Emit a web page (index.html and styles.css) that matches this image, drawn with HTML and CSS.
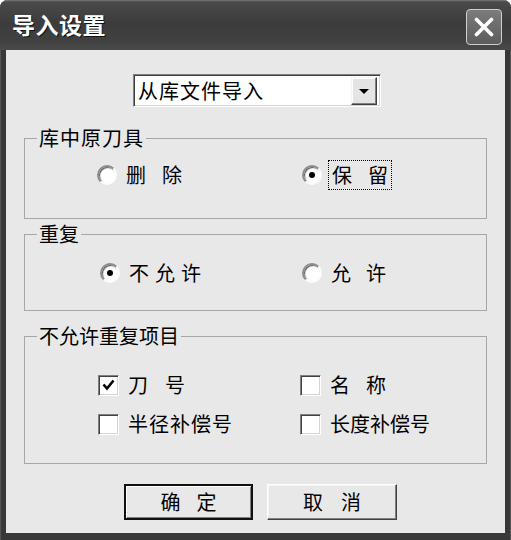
FILE: index.html
```html
<!DOCTYPE html>
<html lang="zh-CN">
<head>
<meta charset="utf-8">
<title>导入设置</title>
<link rel="stylesheet" href="styles.css">
</head>
<body>
<div class="window">
  <div class="titlebar">
    <span class="title">导入设置</span>
    <span class="close">
      <svg width="20" height="20" viewBox="0 0 20 20"><path d="M2.5 2.5 L17.5 17.5 M17.5 2.5 L2.5 17.5" stroke="#fff" stroke-width="3.6" stroke-linecap="round"/></svg>
    </span>
  </div>
  <div class="client">
    <div class="combo">
      <span class="combo-text s1">从库文件导入</span>
      <span class="combo-btn"><span class="tri"></span></span>
    </div>

    <fieldset class="group g1">
      <legend><span class="s1">库中原刀具</span></legend>
      <div class="row r1">
        <label class="opt"><span class="radio"></span><span><span class="s16">删</span>除</span></label>
        <label class="opt"><span class="radio on"></span><span class="focus"><span class="s16">保</span>留</span></label>
      </div>
    </fieldset>

    <fieldset class="group g2">
      <legend>重复</legend>
      <div class="row r2">
        <label class="opt"><span class="radio on"></span><span><span class="s6">不允</span>许</span></label>
        <label class="opt"><span class="radio"></span><span><span class="s15">允</span>许</span></label>
      </div>
    </fieldset>

    <fieldset class="group g3">
      <legend>不允许重复项目</legend>
      <div class="row r3">
        <label class="opt"><span class="check"><svg width="13" height="12" viewBox="0 0 13 12"><path d="M1.5 5.5 L5 9.5 L11.5 1.5" fill="none" stroke="#000" stroke-width="2.6"/></svg></span><span><span class="s17">刀</span>号</span></label>
        <label class="opt"><span class="check"></span><span><span class="s16">名</span>称</span></label>
      </div>
      <div class="row r3 second">
        <label class="opt"><span class="check"></span><span><span class="s1">半径补偿</span>号</span></label>
        <label class="opt"><span class="check"></span><span>长度补偿号</span></label>
      </div>
    </fieldset>

    <div class="buttons">
      <span class="btn default"><span class="s16">确</span>定</span>
      <span class="btn"><span class="s18">取</span>消</span>
    </div>
  </div>
</div>
</body>
</html>
```
FILE: styles.css
```css
* { box-sizing: border-box; }
html, body { margin: 0; padding: 0; background: #fff; }
body {
  width: 511px;
  height: 540px;
  overflow: hidden;
  font-family: "Noto Sans CJK SC", "Noto Sans", sans-serif;
  color: #000;
}
.window {
  width: 511px;
  height: 540px;
  background: #383838;
  border-radius: 8px 8px 0 0;
  display: flex;
  flex-direction: column;
  box-shadow: inset 0 1px 0 #8a8a8a, inset 1px 0 0 #555, inset -1px 0 0 #555;
}
.titlebar {
  height: 50px;
  flex: none;
  display: flex;
  align-items: center;
  justify-content: space-between;
  padding: 0 9px 0 12px;
  border-radius: 8px 8px 0 0;
  background: linear-gradient(#7a7a7a 0, #4a4a4a 2px, #3c3c3c 45%, #404040 80%, #4a4a4a 100%);
}
.title {
  color: #fff;
  font-size: 23px;
  font-weight: bold;
  letter-spacing: 0.5px;
  line-height: 28px;
  text-shadow: 1px 1px 0 #111;
  margin-top: -2px;
}
.close {
  width: 36px;
  height: 36px;
  border: 1px solid #cfcfcf;
  border-radius: 4px;
  background: linear-gradient(#7c7c7c, #5c5c5c);
  display: flex;
  align-items: center;
  justify-content: center;
  margin-top: 4px;
}
.client {
  flex: 1;
  margin: 0 6px 7px 6px;
  background: #e8e8e8;
  padding: 24px 18px 0 18px;
  display: flex;
  flex-direction: column;
  font-size: 20px;
  line-height: 24px;
}
.s1 { letter-spacing: 1px; }
.s6 { letter-spacing: 6px; }
.s15 { letter-spacing: 15px; }
.s16 { letter-spacing: 16px; }
.s17 { letter-spacing: 17px; }
.s18 { letter-spacing: 18px; }

.combo {
  margin-left: 109px;
  width: 248px;
  height: 33px;
  background: #fff;
  border: 1px solid;
  border-color: #808080 #fff #fff #808080;
  box-shadow: inset 1px 1px 0 #404040, inset -1px -1px 0 #d4d4d4;
  display: flex;
  align-items: center;
  justify-content: space-between;
  padding: 2px 3px 2px 4px;
}
.combo-text { line-height: 24px; }
.combo-btn {
  width: 26px;
  height: 28px;
  background: #e4e4e4;
  border: 1px solid;
  border-color: #f4f4f4 #404040 #404040 #f4f4f4;
  box-shadow: inset -1px -1px 0 #808080, inset 1px 1px 0 #fff;
  display: flex;
  align-items: center;
  justify-content: center;
}
.tri {
  width: 0;
  height: 0;
  border-left: 5px solid transparent;
  border-right: 5px solid transparent;
  border-top: 5px solid #000;
  margin-top: 1px;
}

.group {
  margin: 0;
  padding: 0;
  border: 1px solid #a6a6a6;
  min-width: 0;
}
.group legend {
  margin-left: 12px;
  padding: 0 2px;
  font-size: 20px;
  line-height: 24px;
}
.g1 { margin-top: 19px; padding: 13px 0 31px 0; }
.g2 { margin-top: 3px; padding: 15px 0 25px 0; }
.g3 { margin-top: 13px; padding: 25px 0 27px 0; }

.row {
  display: grid;
  align-items: center;
  height: 24px;
}
.r1 { padding-left: 72px; grid-template-columns: 205px auto; }
.r2 { padding-left: 75px; grid-template-columns: 202px auto; }
.r3 { padding-left: 73px; grid-template-columns: 202px auto; }
.r3.second { margin-top: 15px; }

.opt {
  display: flex;
  align-items: center;
  white-space: nowrap;
}
.radio {
  width: 20px;
  height: 20px;
  border-radius: 50%;
  border: 2px solid;
  border-color: #8c8c8c #fdfdfd #fdfdfd #8c8c8c;
  background: #fff;
  box-shadow: inset 1px 1px 1px #555;
  margin-right: 9px;
  display: flex;
  align-items: center;
  justify-content: center;
  flex: none;
}
.radio.on::after {
  content: "";
  width: 6px;
  height: 6px;
  border-radius: 50%;
  background: #000;
}
.check {
  width: 21px;
  height: 21px;
  border: 1px solid;
  border-color: #808080 #fff #fff #808080;
  box-shadow: inset 1px 1px 0 #404040, inset -1px -1px 0 #d4d4d4;
  background: #fff;
  margin-right: 9px;
  display: flex;
  align-items: center;
  justify-content: center;
  flex: none;
}
.focus {
  outline: 1px dotted #000;
  outline-offset: 2px;
  padding: 0 1px;
}

.buttons {
  display: flex;
  margin-top: 20px;
  margin-left: 100px;
  gap: 14px;
}
.btn {
  width: 130px;
  height: 36px;
  background: #e8e8e8;
  border: 1px solid;
  border-color: #fff #404040 #404040 #fff;
  box-shadow: inset -1px -1px 0 #808080, inset 1px 1px 0 #f4f4f4;
  display: flex;
  align-items: center;
  justify-content: center;
  font-size: 20px;
  line-height: 24px;
}
.btn.default {
  width: 129px;
  border: 2px solid #111;
  box-shadow: inset 1px 1px 0 #fff, inset -1px -1px 0 #808080;
}
```
